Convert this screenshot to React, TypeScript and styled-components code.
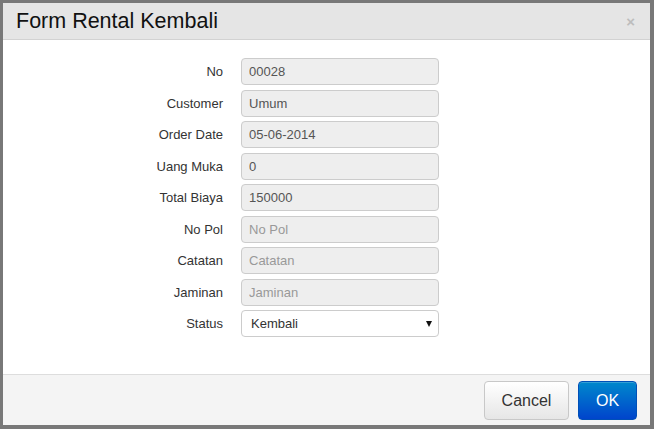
import React from 'react';
import styled, { createGlobalStyle } from 'styled-components';

const GlobalStyle = createGlobalStyle`
  html, body {
    margin: 0;
    padding: 0;
    background: #777;
  }
  body {
    font-family: "Liberation Sans", Arial, sans-serif;
  }
`;

const Backdrop = styled.div`
  width: 654px;
  height: 429px;
  box-sizing: border-box;
  padding: 3px 4px 4px 3px;
  background: #787878;
`;

const Modal = styled.div`
  width: 647px;
  height: 422px;
  background: #fff;
  display: flex;
  flex-direction: column;
`;

const Header = styled.div`
  height: 36px;
  flex-shrink: 0;
  background: #e5e5e5;
  border-bottom: 1px solid #d2d2d2;
  display: flex;
  align-items: center;
  justify-content: space-between;
  padding: 0 15px 0 13px;
`;

const Title = styled.h3`
  margin: 0;
  font-size: 21.5px;
  font-weight: normal;
  color: #111;
  line-height: 24px;
`;

const Close = styled.span`
  font-size: 15px;
  font-weight: bold;
  color: #bdbdbd;
  line-height: 1;
`;

const Body = styled.div`
  flex: 1;
  padding-top: 18px;
`;

const Form = styled.div`
  display: grid;
  grid-template-columns: 220px 198px;
  column-gap: 18px;
  row-gap: 4.5px;
  align-items: center;
`;

const Label = styled.label`
  text-align: right;
  font-size: 13px;
  color: #333;
`;

const Field = styled.input`
  box-sizing: border-box;
  width: 198px;
  height: 27px;
  margin: 0;
  padding: 0 7px;
  font-family: inherit;
  font-size: 13px;
  color: #555;
  background: #eee;
  border: 1px solid #ccc;
  border-radius: 4px;
  outline: none;

  &::placeholder {
    color: #999;
  }
`;

const SelectWrap = styled.div`
  position: relative;
  width: 198px;
  height: 27px;

  &::after {
    content: '';
    position: absolute;
    right: 7px;
    top: 11px;
    border-left: 3.5px solid transparent;
    border-right: 3.5px solid transparent;
    border-top: 6px solid #111;
    pointer-events: none;
  }
`;

const Select = styled.select`
  appearance: none;
  box-sizing: border-box;
  width: 100%;
  height: 100%;
  margin: 0;
  padding: 0 9px;
  font-family: inherit;
  font-size: 13px;
  color: #333;
  background: #fff;
  border: 1px solid #ccc;
  border-radius: 4px;
  outline: none;
`;

const Footer = styled.div`
  height: 51px;
  flex-shrink: 0;
  box-sizing: border-box;
  background: #f4f4f4;
  border-top: 1px solid #ddd;
  display: flex;
  justify-content: flex-end;
  align-items: flex-start;
  gap: 9px;
  padding: 6px 13px 0 0;
`;

const Button = styled.button<{ $primary?: boolean }>`
  box-sizing: border-box;
  height: 39px;
  width: ${p => (p.$primary ? '59px' : '85px')};
  padding: 0;
  font-family: inherit;
  font-size: 16px;
  border-radius: 4px;
  cursor: pointer;
  color: ${p => (p.$primary ? '#fff' : '#333')};
  border: 1px solid ${p => (p.$primary ? '#0050b8' : '#c8c8c8')};
  background: ${p =>
    p.$primary
      ? 'linear-gradient(to bottom, #0088cc, #0044cc)'
      : 'linear-gradient(to bottom, #ffffff, #e6e6e6)'};
  box-shadow: inset 0 1px 0 rgba(255, 255, 255, 0.2);
`;

const rows: { label: string; value?: string; placeholder?: string }[] = [
  { label: 'No', value: '00028' },
  { label: 'Customer', value: 'Umum' },
  { label: 'Order Date', value: '05-06-2014' },
  { label: 'Uang Muka', value: '0' },
  { label: 'Total Biaya', value: '150000' },
  { label: 'No Pol', placeholder: 'No Pol' },
  { label: 'Catatan', placeholder: 'Catatan' },
  { label: 'Jaminan', placeholder: 'Jaminan' },
];

const App = () => {
  return (
    <>
      <GlobalStyle />
      <Backdrop>
        <Modal>
          <Header>
            <Title>Form Rental Kembali</Title>
            <Close>×</Close>
          </Header>
          <Body>
            <Form>
              {rows.map(r => (
                <React.Fragment key={r.label}>
                  <Label>{r.label}</Label>
                  <Field readOnly value={r.value ?? ''} placeholder={r.placeholder} />
                </React.Fragment>
              ))}
              <Label>Status</Label>
              <SelectWrap>
                <Select defaultValue="Kembali">
                  <option>Kembali</option>
                  <option>Rental</option>
                </Select>
              </SelectWrap>
            </Form>
          </Body>
          <Footer>
            <Button>Cancel</Button>
            <Button $primary>OK</Button>
          </Footer>
        </Modal>
      </Backdrop>
    </>
  );
};

export default App;
